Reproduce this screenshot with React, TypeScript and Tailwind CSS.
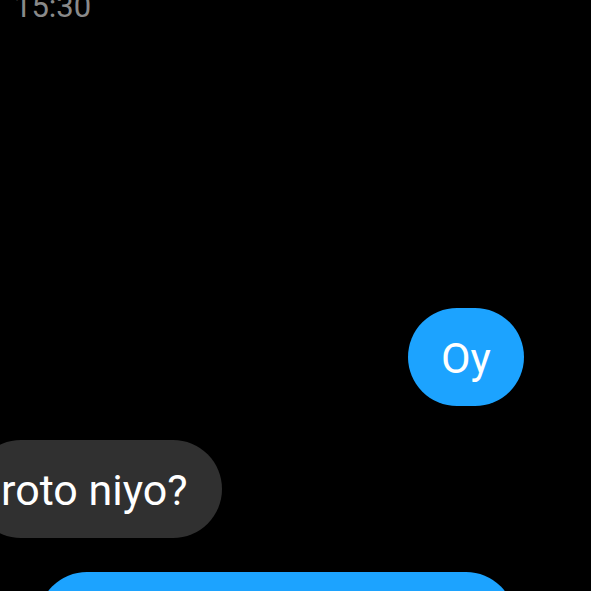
export default function App() {
  return (
    <div
      className="w-[591px] h-[591px] bg-black overflow-hidden flex flex-col"
      style={{ fontFamily: "Roboto, 'Noto Sans', sans-serif" }}
    >
      <div className="mt-[-11px] pl-[14px] text-[31px] leading-[36px] text-[#8a8a8a]">15:30</div>
      <div className="mt-[283px] flex justify-end pr-[67px]">
        <div className="h-[98px] w-[116px] rounded-full bg-[#1ca3ff] flex items-center justify-center pt-[2px] text-white text-[43px] leading-none">
          Oy
        </div>
      </div>
      <div className="mt-[34px] flex">
        <div className="ml-[-28px] h-[98px] w-[250px] rounded-full bg-[#303030] flex items-center pl-[29px] pt-[2px] text-white text-[43px] leading-none">
          roto niyo?
        </div>
      </div>
      <div className="mt-[34px] flex">
        <div className="ml-[38px] h-[98px] w-[477px] rounded-[49px] bg-[#1ca3ff] shrink-0" />
      </div>
    </div>
  );
}
